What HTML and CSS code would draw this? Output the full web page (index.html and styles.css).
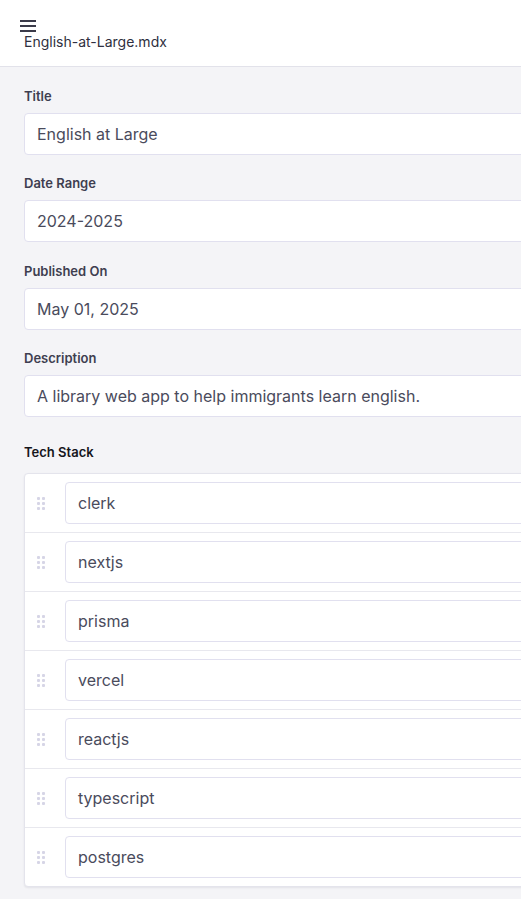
FILE: index.html
```html
<!DOCTYPE html>
<html lang="en">
<head>
<meta charset="utf-8">
<title>English-at-Large.mdx</title>
<link rel="stylesheet" href="styles.css">
</head>
<body>
<header class="topbar">
  <svg class="menu-icon" width="16" height="12" viewBox="0 0 16 12" aria-hidden="true">
    <rect x="0" y="0" width="16" height="2" fill="#3b3b4a"/>
    <rect x="0" y="5" width="16" height="2" fill="#3b3b4a"/>
    <rect x="0" y="10" width="16" height="2" fill="#3b3b4a"/>
  </svg>
  <div class="filename">English-at-Large.mdx</div>
</header>
<main class="form">
  <div class="field">
    <label class="label">Title</label>
    <div class="input">English at Large</div>
  </div>
  <div class="field">
    <label class="label">Date Range</label>
    <div class="input">2024-2025</div>
  </div>
  <div class="field">
    <label class="label">Published On</label>
    <div class="input">May 01, 2025</div>
  </div>
  <div class="field">
    <label class="label">Description</label>
    <div class="input">A library web app to help immigrants learn english.</div>
  </div>
  <div class="list-field">
    <div class="list-label">Tech Stack</div>
    <div class="list">
      <div class="row"><span class="handle"><i></i><i></i><i></i><i></i><i></i><i></i></span><div class="input">clerk</div></div>
      <div class="row"><span class="handle"><i></i><i></i><i></i><i></i><i></i><i></i></span><div class="input">nextjs</div></div>
      <div class="row"><span class="handle"><i></i><i></i><i></i><i></i><i></i><i></i></span><div class="input">prisma</div></div>
      <div class="row"><span class="handle"><i></i><i></i><i></i><i></i><i></i><i></i></span><div class="input">vercel</div></div>
      <div class="row"><span class="handle"><i></i><i></i><i></i><i></i><i></i><i></i></span><div class="input">reactjs</div></div>
      <div class="row"><span class="handle"><i></i><i></i><i></i><i></i><i></i><i></i></span><div class="input">typescript</div></div>
      <div class="row"><span class="handle"><i></i><i></i><i></i><i></i><i></i><i></i></span><div class="input">postgres</div></div>
    </div>
  </div>
</main>
</body>
</html>
```
FILE: styles.css
```css
html, body {
  margin: 0;
  padding: 0;
}
body {
  font-family: Inter, "Noto Sans", sans-serif;
  background: #f4f4f7;
  overflow: hidden;
  width: 521px;
  height: 899px;
}
.topbar {
  background: #ffffff;
  height: 67px;
  border-bottom: 1px solid #e2e2ea;
  box-sizing: border-box;
  padding: 20px 0 0 24px;
  width: 900px;
}
.menu-icon {
  display: block;
  margin-left: -4px;
}
.filename {
  margin-top: 1px;
  font-size: 14px;
  line-height: 17px;
  color: #2f3040;
}
.form {
  padding: 19px 0 0 24px;
  width: 900px;
  box-sizing: border-box;
}
.field {
  display: flex;
  flex-direction: column;
  gap: 7px;
  margin-bottom: 18.4px;
}
.label {
  font-size: 13px;
  line-height: 20px;
  font-weight: 600;
  color: #3e3e50;
}
.input {
  background: #ffffff;
  border: 1px solid #e1e0ef;
  border-radius: 4px;
  height: 42px;
  box-sizing: border-box;
  padding: 0 12px;
  display: flex;
  align-items: center;
  font-size: 16px;
  color: #4a4b5c;
  width: 100%;
}
.list-field {
  margin-top: 25px;
}
.list-label {
  font-size: 13px;
  line-height: 20px;
  font-weight: 600;
  color: #15151c;
  margin-bottom: 11px;
}
.list {
  background: #ffffff;
  border: 1px solid #e4e4ec;
  border-radius: 4px;
  box-shadow: 0 1px 2px rgba(30, 30, 60, 0.08);
}
.row {
  display: flex;
  align-items: center;
  padding: 0 0 0 12px;
  border-bottom: 1px solid #e8e8ee;
  height: 59px;
  box-sizing: border-box;
}
.row:last-child {
  border-bottom: none;
  height: 58px;
}
.handle {
  display: grid;
  grid-template-columns: 3px 3px;
  grid-auto-rows: 3px;
  gap: 2px;
  width: 8px;
  margin-right: 20px;
  flex-shrink: 0;
}
.handle i {
  display: block;
  width: 3px;
  height: 3px;
  background: #d6d5e6;
  border-radius: 1px;
}
```
